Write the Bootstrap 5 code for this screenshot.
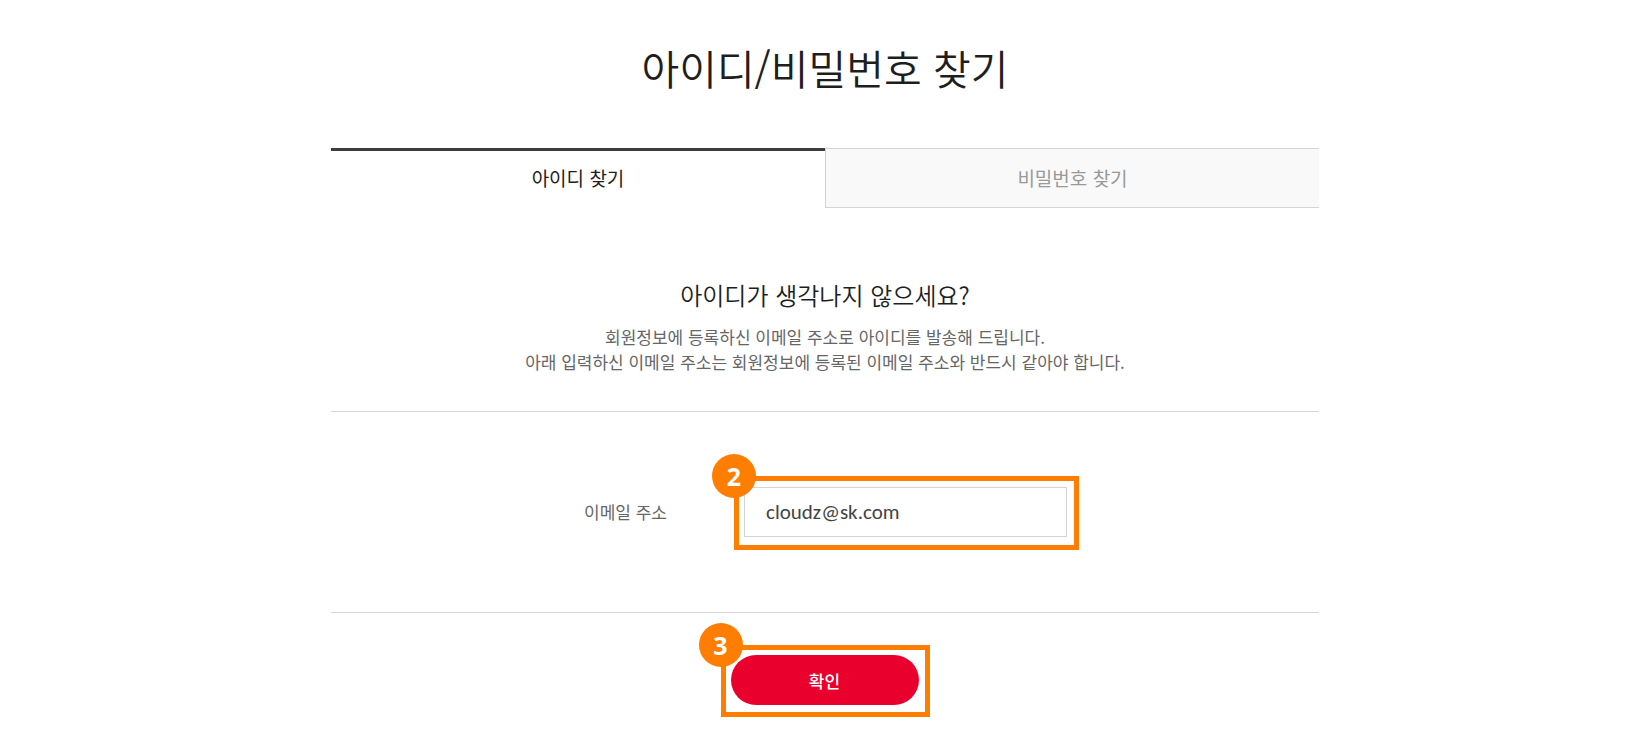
<!DOCTYPE html>
<html lang="ko">
<head>
<meta charset="utf-8">
<meta name="viewport" content="width=device-width, initial-scale=1">
<title>아이디/비밀번호 찾기</title>
<link href="https://cdn.jsdelivr.net/npm/bootstrap@5.3.0/dist/css/bootstrap.min.css" rel="stylesheet">
<style>
  body { font-family: "Noto Sans CJK KR", sans-serif; color: #1e1e1e; background: #fff; }
  .find-page { max-width: 988px; padding-top: 35px; }
  .page-title { font-size: 41px; line-height: 64px; font-weight: 350; margin-bottom: 49px; }
  .find-tabs .nav-link { height: 60px; border-radius: 0; font-size: 19px; line-height: 30px; padding: 14px 0;
    color: #999; background: #f9f9f9; border: 1px solid #d4d4d4; border-right: 0; }
  .find-tabs .nav-link.active { color: #1e1e1e; background: #fff; border: 0; border-top: 3px solid #3e3c40; padding-top: 12px; }
  .intro { padding: 69px 0 37px; border-bottom: 1px solid #d4d4d4; }
  .intro h2 { font-size: 24px; line-height: 36px; font-weight: 350; margin-bottom: 11px; }
  .intro p { font-size: 17px; line-height: 25px; color: #666; }
  .email-row { padding: 64px 0 62px; border-bottom: 1px solid #d4d4d4; }
  .email-row label { width: 403px; padding: 0 0 2px 253px; font-size: 17px; color: #666; }
  .guide-box { position: relative; border: 5px solid #ff7d00; }
  .email-row .guide-box { padding: 6px 7px 8px 5px; }
  .submit-row .guide-box { padding: 5px 6px 7px 5px; }
  .guide-box .form-control { width: 323px; height: 50px; padding: 0 20px 0 21px; border: 1px solid #d4d4d4; border-radius: 0;
    font-family: Carlito, "Open Sans", sans-serif; font-size: 21px; color: #444; }
  .guide-num { position: absolute; left: -27px; top: -27px; width: 44px; height: 44px; border-radius: 50%;
    background: #ff7d00; color: #fff; font: 700 25px/44px "Open Sans", sans-serif; text-align: center; }
  .submit-row { padding: 32px 0; }
  .btn-confirm { width: 188px; height: 50px; border-radius: 25px; background: #ea002c; color: #fff; font-size: 17px; font-weight: 500; padding: 2px 0 0; }
  .btn-confirm:hover { background: #c80026; color: #fff; }
</style>
</head>
<body>
<main class="find-page mx-auto">
  <h1 class="page-title text-center">아이디/비밀번호 찾기</h1>
  <nav class="nav nav-fill find-tabs row g-0">
    <a class="nav-link active col-6" href="#" aria-current="page">아이디 찾기</a>
    <a class="nav-link col-6" href="#">비밀번호 찾기</a>
  </nav>
  <section class="intro text-center">
    <h2>아이디가 생각나지 않으세요?</h2>
    <p class="mb-0">회원정보에 등록하신 이메일 주소로 아이디를 발송해 드립니다.<br>아래 입력하신 이메일 주소는 회원정보에 등록된 이메일 주소와 반드시 같아야 합니다.</p>
  </section>
  <form>
    <div class="email-row d-flex align-items-center">
      <label for="email">이메일 주소</label>
      <div class="guide-box">
        <input class="form-control" type="email" id="email" value="cloudz@sk.com">
        <span class="guide-num">2</span>
      </div>
    </div>
    <div class="submit-row d-flex justify-content-center">
      <div class="guide-box">
        <button class="btn btn-confirm d-block" type="button">확인</button>
        <span class="guide-num">3</span>
      </div>
    </div>
  </form>
</main>
<script src="https://cdn.jsdelivr.net/npm/bootstrap@5.3.0/dist/js/bootstrap.bundle.min.js"></script>
</body>
</html>
